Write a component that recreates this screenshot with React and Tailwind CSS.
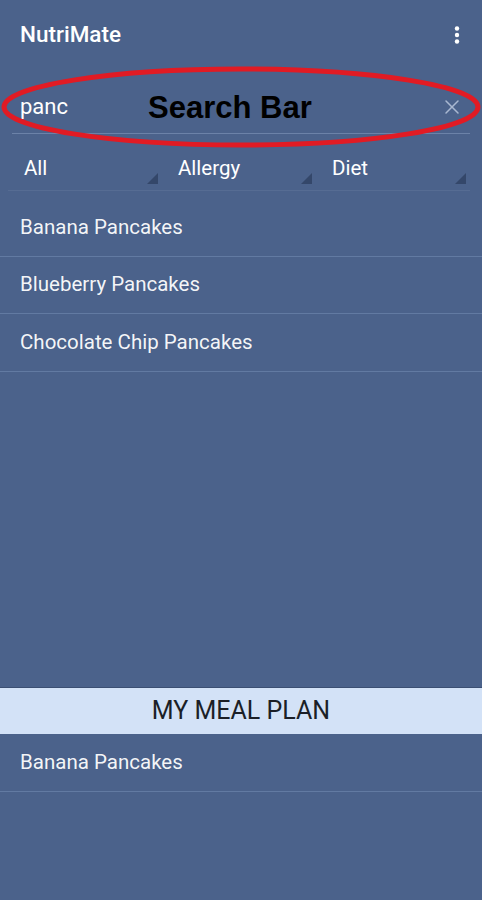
import { X } from "lucide-react";

const results = ["Banana Pancakes", "Blueberry Pancakes", "Chocolate Chip Pancakes"];
const mealPlan = ["Banana Pancakes"];
const filters = ["All", "Allergy", "Diet"];

function Spinner({ label }) {
  return (
    <div className="relative w-[154px] h-[44px] flex items-center px-4 border-b border-[#566c93]">
      <span className="text-[20.5px] text-white">{label}</span>
      <svg className="absolute right-1 bottom-[6px]" width="11" height="11" viewBox="0 0 11 11">
        <polygon points="11,0 11,11 0,11" fill="#34476a" />
      </svg>
    </div>
  );
}

function Row({ text }) {
  return (
    <div className="h-[57.5px] flex items-center px-5 border-b border-[#627aa2]">
      <span className="text-[20.5px] text-white/95">{text}</span>
    </div>
  );
}

export default function App() {
  return (
    <div
      className="relative w-[482px] h-[900px] bg-[#4b628b] flex flex-col overflow-hidden"
      style={{ fontFamily: "Roboto, 'Noto Sans', sans-serif" }}
    >
      <div className="h-[70px] flex items-center justify-between pl-5 pr-[22px] shrink-0">
        <span className="text-[22.5px] font-medium text-white">NutriMate</span>
        <svg width="6" height="18" viewBox="0 0 6 18">
          <circle cx="3" cy="2.5" r="2.2" fill="white" />
          <circle cx="3" cy="9" r="2.2" fill="white" />
          <circle cx="3" cy="15.5" r="2.2" fill="white" />
        </svg>
      </div>

      <div className="mx-3 h-[64px] pt-[10px] flex items-center justify-between pl-2 pr-[6px] border-b border-[#6c82a8] shrink-0">
        <span className="text-[22px] text-white">panc</span>
        <X className="w-[24px] h-[24px] text-[#a9b8d1]" strokeWidth={1.5} />
      </div>

      <div className="mt-[13px] mx-2 flex shrink-0">
        {filters.map((f) => (
          <Spinner key={f} label={f} />
        ))}
      </div>

      <div className="flex-1 mt-[8px]">
        {results.map((r) => (
          <Row key={r} text={r} />
        ))}
      </div>

      <div className="shrink-0 h-[213px]">
        <div className="h-[47px] bg-[#d3e2f7] border-t border-[#3b4f73] flex items-center justify-center">
          <span className="text-[25px] text-[#1b1f27]">MY MEAL PLAN</span>
        </div>
        {mealPlan.map((m) => (
          <Row key={m} text={m} />
        ))}
      </div>

      {/* annotation overlay */}
      <svg className="absolute left-0 top-0 pointer-events-none" width="482" height="160" viewBox="0 0 482 160">
        <ellipse cx="241" cy="107" rx="237" ry="38" fill="none" stroke="#e11b24" strokeWidth="5" />
      </svg>
      <span
        className="absolute left-[148px] top-[92px] text-[31px] font-bold text-black leading-none"
        style={{ fontFamily: "'Liberation Sans', Arial, sans-serif" }}
      >
        Search Bar
      </span>
    </div>
  );
}
